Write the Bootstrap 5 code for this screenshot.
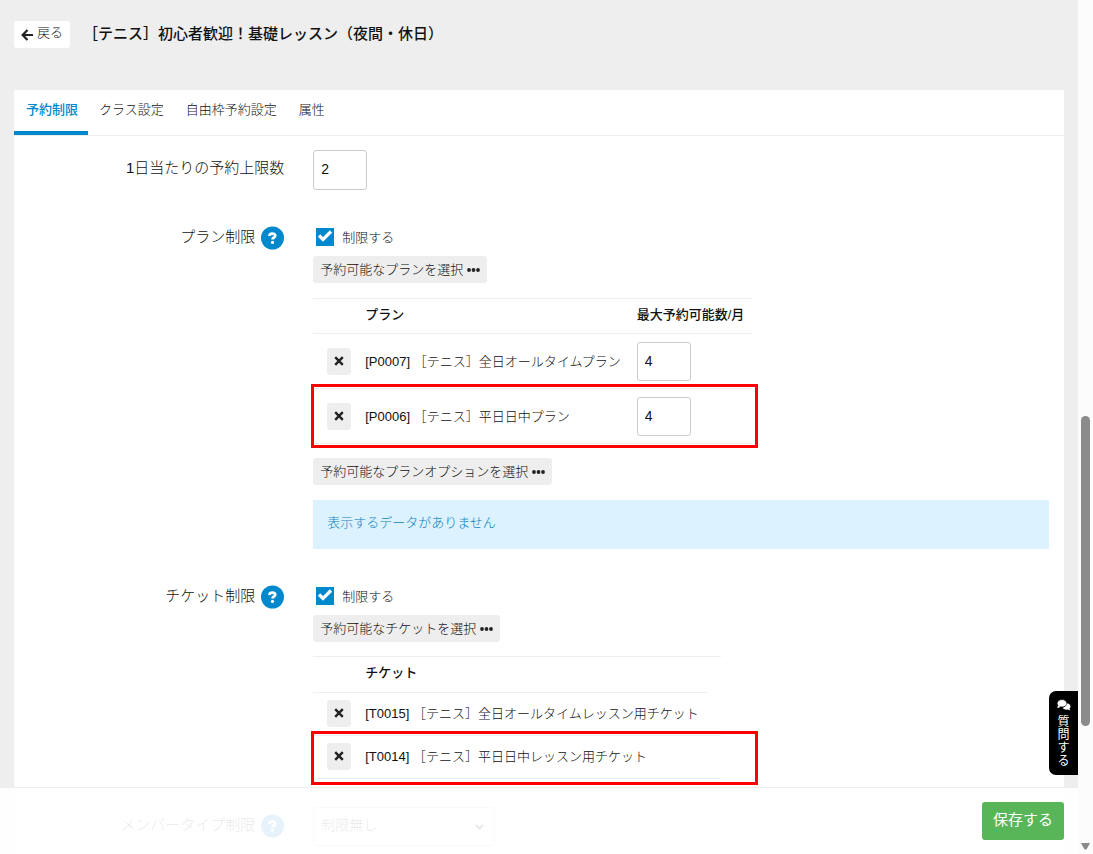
<!DOCTYPE html>
<html lang="ja">
<head>
<meta charset="utf-8">
<meta name="viewport" content="width=device-width, initial-scale=1">
<title>予約制限</title>
<link href="https://cdn.jsdelivr.net/npm/bootstrap@5.3.0/dist/css/bootstrap.min.css" rel="stylesheet">
<style>
body { background: #eee; color: #111; font-family: "Liberation Sans", "Noto Sans CJK JP", sans-serif; font-size: 13px; line-height: 20px; font-weight: 300; }
.page-main { min-width: 0; }
.page-head { padding: 21px 14px 0; height: 90px; gap: 13px; }
.btn { --bs-btn-font-size: 13px; --bs-btn-line-height: 19px; --bs-btn-font-weight: 300; --bs-btn-border-radius: 3px; --bs-btn-border-width: 0; --bs-btn-color: #111; --bs-btn-padding-x: 7px; --bs-btn-padding-y: 4px; }
.btn-back { --bs-btn-bg: #fff; --bs-btn-line-height: 18px; padding-top: 3px; padding-bottom: 6px; }
.btn-pick, .btn-remove { --bs-btn-bg: #eee; }
.btn-pick { display: inline-flex; align-items: center; gap: 4px; padding-bottom: 5px; height: 27px; }
.btn-pick svg { margin-top: 1px; }
.btn-remove { width: 24px; height: 27px; padding: 0 0 1px; display: flex; align-items: center; justify-content: center; }
.page-title { font-size: 15px; line-height: 25px; font-weight: 500; }
.panel { margin: 0 14px; }
.nav-tabs { --bs-nav-tabs-border-width: 0; border-bottom: 1px solid #eee; }
.nav-tabs .nav-link { color: #111; padding: 10px 11px 11px; border-bottom: 4px solid transparent; border-radius: 0; }
.nav-tabs .nav-link.active { color: #08c; font-weight: 500; border-bottom: 4px solid #08c; padding-left: 12px; padding-right: 10px; }
.form-area { padding: 14px 0 40px 29px; }
.form-line { margin-bottom: 35px; }
.form-line > div { padding: 0 15px; }
.form-line > .line-label { padding-right: 14px; font-size: 15px; line-height: 24px; display: flex; justify-content: flex-end; align-items: flex-start; gap: 5px; }
.label-low { padding-top: 6px !important; }
.help { display: block; width: 24px; height: 24px; padding: 0; border: 0; background: none; line-height: 0; margin-top: 1px; }
.form-control, .form-select { border: 1px solid #ccc; border-radius: 3px; color: #111; font-size: 14px; line-height: 20px; font-weight: 300; }
.num-box { width: 54px; height: 40px; padding: 8px 7px 10px; }
td .num-box { height: 39px; }
.check-line { height: 24px; margin-bottom: 7px; padding-left: 3px; gap: 8px; }
.check-line label { padding-top: 2px; }
.form-check-input { width: 18px; height: 18px; margin: 0; }
.form-check-input[type=checkbox] { border-radius: 0; }
.form-check-input:checked { background-color: #08c; border-color: #08c; background-size: 18px 18px; background-image: url("data:image/svg+xml,%3Csvg xmlns='http://www.w3.org/2000/svg' viewBox='0 0 18 18'%3E%3Cpath d='M3 7.500l4 4 8-8' fill='none' stroke='%23fff' stroke-width='3.200'/%3E%3C/svg%3E"); }
.limit-table { border-collapse: separate; border-spacing: 0; margin-top: 15px; margin-bottom: 14px; white-space: nowrap; }
.limit-table th { border-top: 1px solid #eee; font-weight: 500; padding: 6px 8px 8px; border-bottom: 1px solid #eee; }
.limit-table td { padding: 8px 8px 7px; border-bottom: 1px solid #eee; }
.limit-table th:nth-child(2), .limit-table td:nth-child(2) { padding-left: 7px; }
.limit-table th:first-child, .limit-table td:first-child { padding-left: 14px; padding-right: 7px; }
.limit-table.ticket-table { margin-top: 14px; margin-bottom: 28px; }
.ticket-table th { padding-bottom: 9px; }
.ticket-table td { padding-top: 7px; padding-bottom: 8px; }
.ticket-table th.spare { border-bottom-color: transparent; padding: 0; width: 14px; }
.ticket-table td.spare { padding: 0; width: 14px; }
.spot { position: absolute; left: -2px; width: 447px; border: 3px solid #f00; pointer-events: none; }
.spot-plan { bottom: -4px; height: 64px; }
.spot-ticket { bottom: -6px; height: 54px; }
.notice { background: #dcf3ff; color: #0b7fc0; padding: 13px 14px 16px; margin-top: 15px; }
.form-select { width: 182px; height: 39px; padding: 7px 7px 10px; background-size: 9px 9px; background-position: right 10px center; background-image: url("data:image/svg+xml,%3Csvg xmlns='http://www.w3.org/2000/svg' viewBox='0 0 9 9'%3E%3Cpath d='M1 3l3.500 3.500L8 3' fill='none' stroke='%23222' stroke-width='2'/%3E%3C/svg%3E"); }
.save-bar { position: absolute; left: 0; right: 0; bottom: 0; padding: 14px; border-top: 1px solid #eee; background: rgba(255,255,255,.9); }
.btn-save { --bs-btn-bg: #58b558; --bs-btn-color: #fff; --bs-btn-font-size: 15px; --bs-btn-font-weight: 400; height: 38px; padding: 8px 11px 11px; }
.ask { position: absolute; right: 0; bottom: 79px; width: 29px; height: 84px; background: #000; color: #fff; border: 0; border-radius: 7px 0 0 7px; font-size: 12px; line-height: 13px; padding: 8px 0 0; display: flex; flex-direction: column; align-items: center; }
.ask span { width: 12px; word-break: break-all; font-weight: 400; margin-top: 5px; }
.track { width: 15px; background: #fcfcfc; padding: 0 3px; }
.thumb { margin-top: 416px; height: 310px; width: 9px; border-radius: 5px; background: #8b8b8b; }
</style>
</head>
<body>
<svg class="d-none" aria-hidden="true">
  <symbol id="i-help" viewBox="0 0 24 24"><circle cx="12.500" cy="12" r="11.500" fill="#08c"/><path d="M9.300 9.900c.3-1.600 1.400-2.200 3-2.200 1.800 0 2.900.8 2.900 2.100 0 1.800-2.700 1.700-2.700 3.700" fill="none" stroke="#fff" stroke-width="2.800"/><circle cx="12.500" cy="16.400" r="1.600" fill="#fff"/></symbol>
  <symbol id="i-x" viewBox="0 0 10 10"><path d="M1.200 1.200l7.600 7.600M8.800 1.200L1.200 8.800" stroke="#222" stroke-width="2.400"/></symbol>
  <symbol id="i-dots" viewBox="0 0 13 4"><circle cx="2" cy="2" r="1.900"/><circle cx="6.500" cy="2" r="1.900"/><circle cx="11" cy="2" r="1.900"/></symbol>
</svg>
<div class="d-flex vh-100 overflow-hidden">
  <div class="page-main flex-grow-1 position-relative overflow-hidden">
    <header class="page-head d-flex align-items-start">
      <button type="button" class="btn btn-back d-flex align-items-center gap-1 flex-shrink-0"><svg class="mt-1" width="12" height="12" viewBox="0 0 12 12"><path d="M6.500 1L1.600 6l4.900 5M1.800 6H12" fill="none" stroke="#222" stroke-width="2.200"/></svg>戻る</button>
      <h1 class="page-title mb-0">［テニス］初心者歓迎！基礎レッスン（夜間・休日）</h1>
    </header>
    <main class="panel bg-white">
      <ul class="nav nav-tabs">
        <li class="nav-item"><a class="nav-link active" href="#limit" aria-current="page">予約制限</a></li>
        <li class="nav-item"><a class="nav-link" href="#class">クラス設定</a></li>
        <li class="nav-item"><a class="nav-link" href="#free">自由枠予約設定</a></li>
        <li class="nav-item"><a class="nav-link" href="#attr">属性</a></li>
      </ul>
      <form class="form-area" id="limit">
        <div class="row g-0 form-line">
          <div class="col-3 line-label label-low"><label for="perday">1日当たりの予約上限数</label></div>
          <div class="col-9"><input class="form-control num-box" id="perday" type="text" value="2"></div>
        </div>
        <div class="row g-0 form-line">
          <div class="col-3 line-label"><span>プラン制限</span><button type="button" class="help" aria-label="ヘルプ"><svg width="24" height="24"><use href="#i-help"/></svg></button></div>
          <div class="col-9">
            <div class="check-line d-flex align-items-center"><input class="form-check-input" type="checkbox" id="planon" checked><label for="planon">制限する</label></div>
            <button type="button" class="btn btn-pick">予約可能なプランを選択<svg width="13" height="4" fill="#222"><use href="#i-dots"/></svg></button>
            <div class="position-relative">
              <table class="limit-table">
                <thead><tr><th></th><th>プラン</th><th>最大予約可能数/月</th></tr></thead>
                <tbody>
                  <tr><td><button type="button" class="btn btn-remove" aria-label="削除"><svg width="10" height="10"><use href="#i-x"/></svg></button></td><td>[P0007] ［テニス］全日オールタイムプラン</td><td><input class="form-control num-box" type="text" value="4" aria-label="最大予約可能数"></td></tr>
                  <tr><td><button type="button" class="btn btn-remove" aria-label="削除"><svg width="10" height="10"><use href="#i-x"/></svg></button></td><td>[P0006] ［テニス］平日日中プラン</td><td><input class="form-control num-box" type="text" value="4" aria-label="最大予約可能数"></td></tr>
                </tbody>
              </table>
              <div class="spot spot-plan"></div>
            </div>
            <button type="button" class="btn btn-pick">予約可能なプランオプションを選択<svg width="13" height="4" fill="#222"><use href="#i-dots"/></svg></button>
            <div class="notice">表示するデータがありません</div>
          </div>
        </div>
        <div class="row g-0 form-line mb-0 pt-0">
          <div class="col-3 line-label"><span>チケット制限</span><button type="button" class="help" aria-label="ヘルプ"><svg width="24" height="24"><use href="#i-help"/></svg></button></div>
          <div class="col-9">
            <div class="check-line d-flex align-items-center"><input class="form-check-input" type="checkbox" id="ticketon" checked><label for="ticketon">制限する</label></div>
            <button type="button" class="btn btn-pick">予約可能なチケットを選択<svg width="13" height="4" fill="#222"><use href="#i-dots"/></svg></button>
            <div class="position-relative">
              <table class="limit-table ticket-table">
                <thead><tr><th></th><th>チケット</th><th class="spare"></th></tr></thead>
                <tbody>
                  <tr><td><button type="button" class="btn btn-remove" aria-label="削除"><svg width="10" height="10"><use href="#i-x"/></svg></button></td><td>[T0015] ［テニス］全日オールタイムレッスン用チケット</td><td class="spare"></td></tr>
                  <tr><td><button type="button" class="btn btn-remove" aria-label="削除"><svg width="10" height="10"><use href="#i-x"/></svg></button></td><td>[T0014] ［テニス］平日日中レッスン用チケット</td><td class="spare"></td></tr>
                </tbody>
              </table>
              <div class="spot spot-ticket"></div>
            </div>
          </div>
        </div>
        <div class="row g-0 form-line">
          <div class="col-3 line-label label-low"><label for="member">メンバータイプ制限</label><button type="button" class="help" aria-label="ヘルプ"><svg width="24" height="24"><use href="#i-help"/></svg></button></div>
          <div class="col-9"><select class="form-select" id="member"><option>制限無し</option></select></div>
        </div>
      </form>
    </main>
    <footer class="save-bar d-flex justify-content-end"><button type="submit" form="limit" class="btn btn-save">保存する</button></footer>
    <button type="button" class="ask"><svg width="14" height="12" viewBox="0 0 14 12"><path d="M8.500 4.200C12 4 13.500 5.700 13.500 7.500c0 1-.4 1.700-1 2.300.1.700.5 1.100.9 1.500-1 .1-1.900-.3-2.600-.8-2.200.5-4.500-.2-5.300-1.700C8 8.500 9.300 6.500 8.500 4.200z" fill="#fff"/><ellipse cx="5" cy="4.300" rx="4.800" ry="3.700" fill="#fff" stroke="#000" stroke-width=".6"/><path d="M1 6L.4 9c1 .1 2-.4 2.800-1.200z" fill="#fff"/></svg><span>質問する</span></button>
  </div>
  <div class="track d-flex flex-column justify-content-between flex-shrink-0" aria-hidden="true">
    <div class="thumb"></div>
    <svg class="mb-1" width="9" height="7" viewBox="0 0 9 7"><path d="M0 0h9L5.500 6.500h-2z" fill="#8b8b8b"/></svg>
  </div>
</div>
<script src="https://cdn.jsdelivr.net/npm/bootstrap@5.3.0/dist/js/bootstrap.bundle.min.js"></script>
</body>
</html>
